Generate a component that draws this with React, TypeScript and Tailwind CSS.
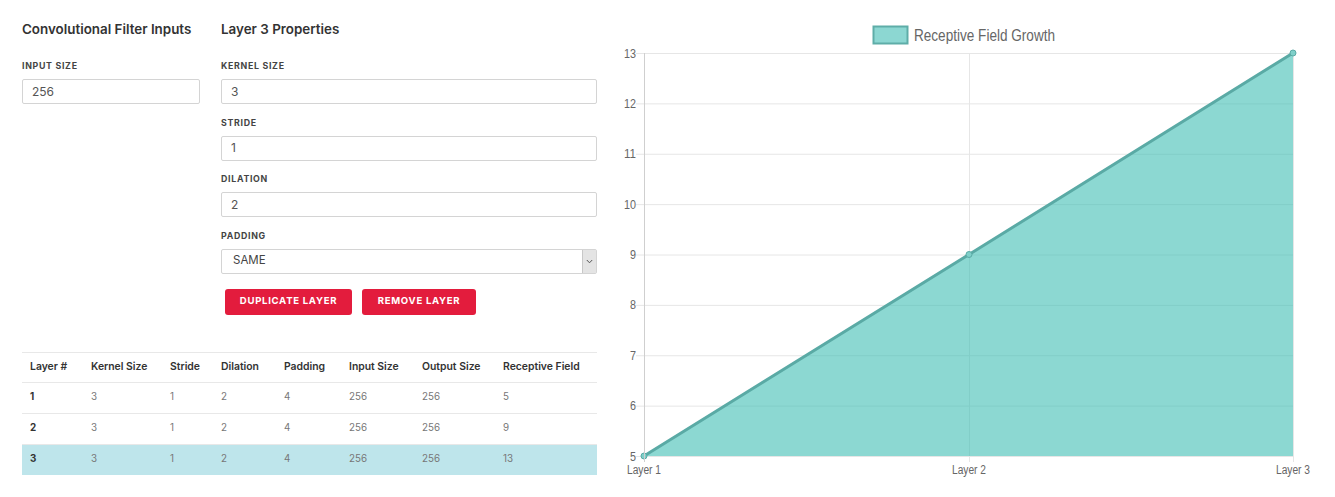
import React from "react";

const font = { fontFamily: "Inter, 'Noto Sans', sans-serif" };

function Field({ label, value, w }: { label: string; value: string; w: string }) {
  return (
    <div className={`flex flex-col ${w}`}>
      <div className="h-[12px] leading-[12px] text-[8.8px] font-bold tracking-[0.7px] text-[#444] mb-[7px]">{label}</div>
      <div className="h-[25px] border border-[#d4d4d4] rounded-[2px] flex items-center pl-[9px] text-[12px] text-[#555] mb-[12.5px]">{value}</div>
    </div>
  );
}

function Chart() {
  const X0 = 644, X1 = 969, X2 = 1293;
  const yv = (v: number) => 456 - (v - 5) * 50.375;
  const ticks = [5, 6, 7, 8, 9, 10, 11, 12, 13];
  const chartFont = "'Liberation Sans', Arial, sans-serif";
  return (
    <svg width={725} height={497} viewBox="610 0 725 497" className="block">
      <rect x={873.5} y={26.5} width={34} height={17} fill="#8cd7d2" stroke="#5eada8" strokeWidth={2} />
      <text x={914} y={41} fontFamily={chartFont} fontSize={16} fill="#666" textLength={141} lengthAdjust="spacingAndGlyphs">Receptive Field Growth</text>
      {ticks.map((t) => (
        <g key={t}>
          <line x1={636} x2={X2} y1={yv(t) + 0.5} y2={yv(t) + 0.5} stroke="#e6e6e6" strokeWidth={1} />
          <text x={636} y={yv(t) + 4.5} textAnchor="end" fontFamily={chartFont} fontSize={12} fill="#666" textLength={t >= 10 ? 12 : 6} lengthAdjust="spacingAndGlyphs">{t}</text>
        </g>
      ))}
      {[X1, X2].map((x) => (
        <line key={x} x1={x + 0.5} x2={x + 0.5} y1={53} y2={462} stroke="#e6e6e6" strokeWidth={1} />
      ))}
      <polygon points={`${X0},${yv(5)} ${X1},${yv(9)} ${X2},${yv(13)} ${X2},${yv(5)}`} fill="rgba(64,190,180,0.6)" />
      <polyline points={`${X0},${yv(5)} ${X1},${yv(9)} ${X2},${yv(13)}`} fill="none" stroke="#5aaaa5" strokeWidth={3} strokeLinejoin="round" />
      {[[X0, yv(5)], [X1, yv(9)], [X2, yv(13)]].map(([x, y], i) => (
        <circle key={i} cx={x} cy={y} r={3} fill="#7fcfc9" stroke="#5aaaa5" strokeWidth={1} />
      ))}
      <line x1={X0 + 0.5} x2={X0 + 0.5} y1={53} y2={462} stroke="#cfcfcf" strokeWidth={1} />
      {[["Layer 1", X0], ["Layer 2", X1], ["Layer 3", X2]].map(([l, x]) => (
        <text key={l as string} x={x as number} y={474} textAnchor="middle" fontFamily={chartFont} fontSize={12} fill="#666" textLength={34} lengthAdjust="spacingAndGlyphs">{l}</text>
      ))}
    </svg>
  );
}

const rows = [
  ["1", "3", "1", "2", "4", "256", "256", "5"],
  ["2", "3", "1", "2", "4", "256", "256", "9"],
  ["3", "3", "1", "2", "4", "256", "256", "13"],
];
const heads = ["Layer #", "Kernel Size", "Stride", "Dilation", "Padding", "Input Size", "Output Size", "Receptive Field"];
const widths = ["w-[61px]", "w-[79px]", "w-[51px]", "w-[63px]", "w-[65px]", "w-[73px]", "w-[81px]", "w-[102px]"];

export default function App() {
  return (
    <div className="w-[1335px] h-[497px] bg-white flex overflow-hidden" style={font}>
      <div className="w-[610px] pl-[22px] pr-[13px] flex flex-col">
        <div className="flex gap-[21px] pt-[19px]">
          <div className="w-[178px] flex flex-col">
            <div className="h-[20px] leading-[20px] text-[13.4px] font-semibold text-[#333] mb-[21px] whitespace-nowrap">Convolutional Filter Inputs</div>
            <Field label="INPUT SIZE" value="256" w="w-[178px]" />
          </div>
          <div className="w-[377px] flex flex-col">
            <div className="h-[20px] leading-[20px] text-[13.4px] font-semibold text-[#333] mb-[21px]">Layer 3 Properties</div>
            <Field label="KERNEL SIZE" value="3" w="w-full" />
            <Field label="STRIDE" value="1" w="w-full" />
            <Field label="DILATION" value="2" w="w-full" />
            <div className="h-[12px] leading-[12px] text-[8.8px] font-bold tracking-[0.7px] text-[#444] mb-[7px]">PADDING</div>
            <div className="h-[25px] border border-[#d4d4d4] rounded-[2px] flex items-stretch text-[11.5px] text-[#444]">
              <div className="flex-1 flex items-center pl-[11px]">SAME</div>
              <div className="w-[14px] bg-[#e4e4e4] border-l border-[#c8c8c8] flex items-center justify-center">
                <svg width="7" height="5" viewBox="0 0 7 5"><path d="M0.8 1 L3.5 3.8 L6.2 1" fill="none" stroke="#555" strokeWidth="1" /></svg>
              </div>
            </div>
            <div className="flex gap-[10px] pl-[4px] mt-[15px]">
              <button className="w-[127px] h-[26px] rounded-[3px] bg-[#e31c3d] text-white text-[9.6px] font-bold tracking-[0.7px]">DUPLICATE LAYER</button>
              <button className="w-[114px] h-[26px] rounded-[3px] bg-[#e31c3d] text-white text-[9.6px] font-bold tracking-[0.7px]">REMOVE LAYER</button>
            </div>
          </div>
        </div>
        <table className="mt-[37px] w-[575px] border-collapse text-[9.8px]">
          <thead>
            <tr className="h-[30px] border-t border-b border-[#e8e8e8]">
              {heads.map((h, i) => (
                <th key={h} className={`${widths[i]} text-left pl-[8px] font-semibold text-[#333] text-[10.4px] whitespace-nowrap`}>{h}</th>
              ))}
            </tr>
          </thead>
          <tbody>
            {rows.map((r, ri) => (
              <tr key={ri} className={`h-[31px] ${ri === 2 ? "bg-[#bee5eb]" : "border-b border-[#e8e8e8]"}`}>
                {r.map((c, ci) => (
                  <td key={ci} className={`pl-[8px] ${ci === 0 ? "font-bold text-[#333]" : "text-[#777]"}`}>{c}</td>
                ))}
              </tr>
            ))}
          </tbody>
        </table>
      </div>
      <Chart />
    </div>
  );
}
